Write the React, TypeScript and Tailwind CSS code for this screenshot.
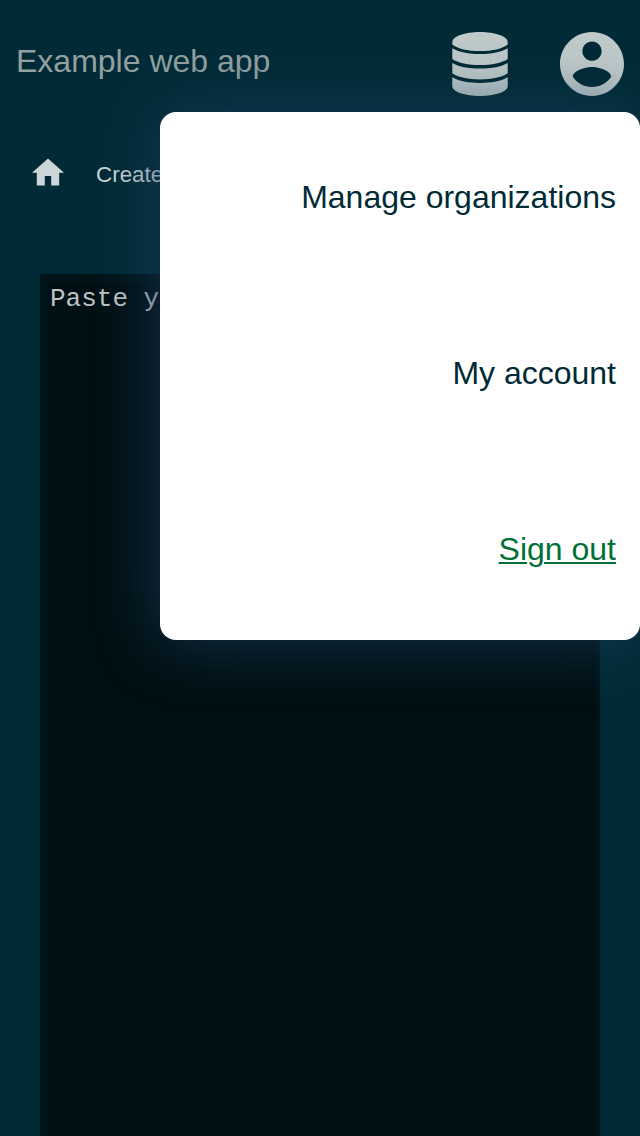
const menu = "text-[32px] leading-[48px] whitespace-nowrap";

export default function App() {
  return (
    <div className="relative flex h-[1136px] w-[640px] flex-col overflow-hidden bg-[#002b36] font-['Liberation_Sans',sans-serif]">
      <header className="flex h-32 items-center justify-between px-4">
        <h1 className="pb-[7px] text-[32px] leading-[48px] text-[#93a1a1]">Example web app</h1>
        <div className="flex gap-[52px] text-[#bfcaca]">
          <svg className="h-16 w-14" viewBox="0 0 56 64" fill="currentColor">
            <path d="M28 0C43 0 55.7 4.4 55.7 10V12.4C50.5 16.6 40.5 19 28 19S5.5 16.6.3 12.4V10C.3 4.4 13 0 28 0Z" />
            <path d="M.3 16.3C6.5 20 16.5 22.1 28 22.1S49.5 20 55.7 16.3V27C50 30.9 39.5 33.1 28 33.1S6 30.9.3 27Z" />
            <path d="M.3 30.9C6.5 34.6 16.5 36.6 28 36.6S49.5 34.6 55.7 30.9V41.3C50 45.3 39.5 47.5 28 47.5S6 45.3.3 41.3Z" />
            <path d="M.3 45.3C6.5 49 16.5 51 28 51S49.5 49 55.7 45.3V54.2C55.7 59.6 43 64 28 64S.3 59.6.3 54.2Z" />
          </svg>
          <svg className="size-16" viewBox="2 2 20 20" fill="currentColor">
            <path d="M12 2C6.48 2 2 6.48 2 12s4.48 10 10 10 10-4.48 10-10S17.52 2 12 2zm0 3c1.66 0 3 1.34 3 3s-1.34 3-3 3-3-1.34-3-3 1.34-3 3-3zm0 14.2c-2.5 0-4.71-1.28-6-3.22.03-1.99 4-3.08 6-3.08 1.99 0 5.97 1.09 6 3.08-1.29 1.94-3.5 3.22-6 3.22z" />
          </svg>
        </div>
      </header>
      <nav className="flex h-[146px] items-start gap-8 px-8 pt-[30px] text-[#ccd5d7]">
        <svg className="h-7 w-8" viewBox="2 2.75 20 17.5" fill="currentColor">
          <path d="M10 20v-6h4v6h5v-8h3L12 3 2 12h3v8z" />
        </svg>
        <span className="mt-px text-[22.4px] leading-8">Create</span>
      </nav>
      <main className="flex min-h-0 grow px-10">
        <div className="grow border-t-8 border-r-4 border-l-8 border-[#001519] bg-[#001014] px-0.5 font-['Liberation_Mono',monospace] text-[26px] leading-[34px] text-[#bfc3c4]">
          Paste your
        </div>
      </main>
      <div className="absolute top-28 right-0 flex h-[528px] w-[480px] flex-col items-end rounded-2xl bg-white px-6 text-[#002b36] shadow-[0_0_64px_rgba(28,60,92,0.8)]">
        <div className="flex h-44 items-center pb-[7px]"><span className={menu}>Manage organizations</span></div>
        <div className="flex h-44 items-center pb-[7px]"><span className={menu}>My account</span></div>
        <a className="flex h-44 items-center pb-[7px] text-[#007038]"><span className="text-[32px] leading-[48px] whitespace-nowrap underline decoration-2 underline-offset-2">Sign out</span></a>
      </div>
    </div>
  );
}
